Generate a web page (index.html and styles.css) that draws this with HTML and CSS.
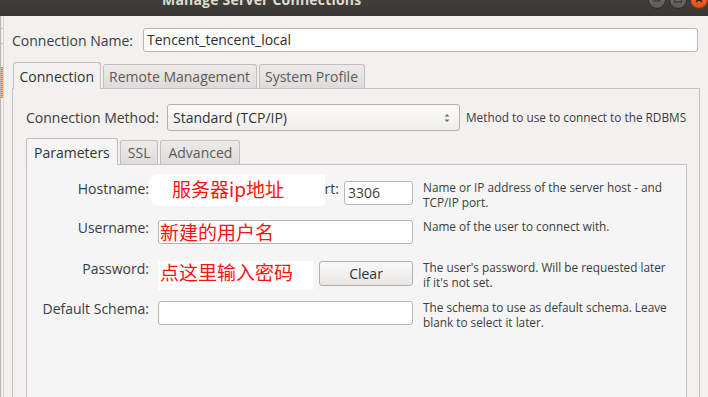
FILE: index.html
```html
<!DOCTYPE html>
<html>
<head>
<meta charset="utf-8">
<title>Manage Server Connections</title>
<link rel="stylesheet" href="styles.css">
</head>
<body>
<div class="titlebar">
  <div class="title">Manage Server Connections</div>
  <div class="wbtns">
    <span class="wbtn"><svg viewBox="0 0 18 18" width="18" height="18"><path d="M5.5 10h7" stroke="#3a3935" stroke-width="1.4"/></svg></span>
    <span class="wbtn"><svg viewBox="0 0 18 18" width="18" height="18"><rect x="5.5" y="4.5" width="7" height="6.5" fill="none" stroke="#3a3935" stroke-width="1.2"/></svg></span>
    <span class="wbtn close"><svg viewBox="0 0 18 18" width="18" height="18"><path d="M6 5l6 6M12 5l-6 6" stroke="#3b1a0c" stroke-width="1.5"/></svg></span>
  </div>
</div>
<div class="window">
  <div class="edge"><span class="edge-box"></span><span class="edge-mark"></span></div>
  <div class="content">
    <div class="name-row">
      <span class="label">Connection Name:</span>
      <div class="entry name-entry">Tencent_tencent_local</div>
    </div>
    <div class="notebook outer">
      <div class="tabs">
        <div class="tab active">Connection</div>
        <div class="tab">Remote Management</div>
        <div class="tab">System Profile</div>
      </div>
      <div class="page outer-page">
        <div class="method-row">
          <span class="label">Connection Method:</span>
          <div class="combo">
            <span>Standard (TCP/IP)</span>
            <svg class="updown" viewBox="0 0 8 14" width="8" height="14"><path d="M1.5 5.5L4 3l2.5 2.5z M1.5 8.5L4 11l2.5-2.5z" fill="#6a6a6a"/></svg>
          </div>
          <span class="help">Method to use to connect to the RDBMS</span>
        </div>
        <div class="notebook inner">
          <div class="tabs">
            <div class="tab active">Parameters</div>
            <div class="tab">SSL</div>
            <div class="tab">Advanced</div>
          </div>
          <div class="page inner-page">
            <div class="params">
              <span class="plabel">Hostname:</span>
              <div class="cell host-cell">
                <div class="entry host-entry"></div>
                <span class="port-label">Port:</span>
                <div class="entry port-entry">3306</div>
                <div class="paint host-paint">服务器ip地址</div>
              </div>
              <span class="help">Name or IP address of the server host - and TCP/IP port.</span>

              <span class="plabel">Username:</span>
              <div class="cell">
                <div class="entry user-entry red">新建的用户名</div>
              </div>
              <span class="help">Name of the user to connect with.</span>

              <span class="plabel">Password:</span>
              <div class="cell pass-cell">
                <div class="paint pass-paint red">点这里输入密码</div>
                <div class="button">Clear</div>
              </div>
              <span class="help">The user's password. Will be requested later if it's not set.</span>

              <span class="plabel">Default Schema:</span>
              <div class="cell">
                <div class="entry schema-entry"></div>
              </div>
              <span class="help">The schema to use as default schema. Leave blank to select it later.</span>
            </div>
          </div>
        </div>
      </div>
    </div>
  </div>
</div>
</body>
</html>
```

FILE: styles.css
```css
* { box-sizing: border-box; }

html, body {
  margin: 0;
  padding: 0;
}

body {
  width: 708px;
  height: 397px;
  overflow: hidden;
  background: #f2f1f0;
  font-family: "Open Sans", "Noto Sans", sans-serif;
  font-size: 14px;
  color: #3c3c3c;
}

/* ---------- title bar ---------- */
.titlebar {
  height: 16px;
  background: linear-gradient(#403f3b, #383733);
  display: flex;
  align-items: flex-start;
  overflow: hidden;
}

.title {
  margin-left: 162px;
  margin-top: -8px;
  font-weight: bold;
  font-size: 14px;
  line-height: 16px;
  color: #dfdbd2;
  letter-spacing: 0.2px;
}

.wbtns {
  margin-left: auto;
  margin-right: 0;
  display: flex;
  gap: 3px;
  margin-top: -9px;
}

.wbtn {
  width: 18px;
  height: 18px;
  border-radius: 50%;
  background: linear-gradient(#77766f, #5c5b56);
  border: 1px solid #2e2d2a;
  display: flex;
}

.wbtn svg { margin: -1px; }

.wbtn.close {
  background: linear-gradient(#f27844, #e04c17);
  border-color: #8c2e0c;
}

/* ---------- window body ---------- */
.window {
  display: flex;
  height: 400px;
}

.edge {
  width: 4px;
  flex: none;
  border-left: 1px solid #b9b6b1;
  border-right: 1px solid #d6d4d0;
  display: flex;
  flex-direction: column;
}

.edge-box {
  display: block;
  height: 16px;
  margin-top: 12px;
  border-top: 1px solid #c9c6c2;
  border-bottom: 1px solid #c9c6c2;
}

.edge-mark {
  display: block;
  width: 2px;
  height: 31px;
  margin-top: 23px;
  background: repeating-linear-gradient(#f07a45 0 1px, #f6b28f 1px 2px);
}

.content {
  flex: 1;
  padding: 12px 8px 0 8px;
  display: flex;
  flex-direction: column;
}

.name-row {
  display: grid;
  grid-template-columns: 131px 1fr;
  align-items: center;
  height: 24px;
}

.label { white-space: nowrap; }

.entry {
  height: 24px;
  background: #fff;
  border: 1px solid #b9b6b2;
  border-radius: 3px;
  padding: 0 3px;
  line-height: 22px;
  white-space: nowrap;
  overflow: hidden;
}

.name-entry {
  margin-right: 2px;
  color: #2d2d2d;
}

/* ---------- notebooks ---------- */
.notebook {
  display: flex;
  flex-direction: column;
}

.outer { margin-top: 10px; flex: 1; }

.tabs {
  display: flex;
  align-items: flex-end;
  gap: 2px;
  padding-left: 1px;
  position: relative;
  z-index: 1;
}

.tab {
  height: 24px;
  padding: 0 5.5px;
  border: 1px solid #c2bfba;
  border-bottom: none;
  border-radius: 3px 3px 0 0;
  background: linear-gradient(#ecebea, #dedcda);
  color: #5a5a5a;
  line-height: 23px;
  white-space: nowrap;
}

.tab.active {
  height: 27px;
  background: #f2f1f0;
  color: #333;
  margin-bottom: -1px;
  line-height: 28px;
}

.inner .tabs { padding-left: 0; }

.inner .tab { padding: 0 7px; }

.page {
  border: 1px solid #c4c1bc;
  flex: 1;
}

.outer-page {
  background: #f2f1f0;
  padding: 15px 0 0 13px;
  display: flex;
  flex-direction: column;
}

.method-row {
  display: flex;
  align-items: center;
  height: 27px;
}

.method-row .label { width: 141px; flex: none; }

.combo {
  width: 293px;
  height: 27px;
  flex: none;
  border: 1px solid #b4b1ac;
  border-radius: 3px;
  background: linear-gradient(#fbfbfa, #efeeed);
  display: flex;
  align-items: center;
  padding: 0 8px 0 5px;
  color: #333;
}

.combo span { flex: 1; }

.updown { display: block; }

.help {
  font-size: 11.8px;
  line-height: 15px;
  color: #3c3c3c;
}

.method-row .help { margin-left: 6px; white-space: nowrap; }

.inner {
  margin-top: 7px;
  margin-right: 12px;
  flex: 1;
}

.inner .tab.active { background: #f5f5f5; }

.inner-page {
  background: #f5f5f5;
  padding-top: 16px;
}

/* ---------- parameters grid ---------- */
.params {
  display: grid;
  grid-template-columns: 122px 255px 1fr;
  grid-template-rows: 39px 41px 40px 40px;
  column-gap: 9px;
  align-items: start;
}

.plabel {
  text-align: right;
  line-height: 16px;
  white-space: nowrap;
  color: #3c3c3c;
}

.params .help {
  margin-left: 1px;
  margin-top: -1px;
  padding-right: 14px;
}

.cell {
  display: flex;
  align-items: flex-start;
  position: relative;
}

.host-entry { width: 140px; }

.port-label { margin-left: auto; margin-right: 5px; line-height: 16px; }

.port-entry { width: 69px; }

.user-entry {
  width: 255px;
  padding-left: 1px;
  overflow: visible;
}

.schema-entry { width: 255px; }

.red {
  font-family: "Noto Sans CJK SC", sans-serif;
  font-size: 19px;
  color: #ff1010;
}

.user-entry.red { line-height: 21px; }

.paint {
  background: #fff;
  white-space: nowrap;
}

.host-paint {
  position: absolute;
  left: -9px;
  top: -7px;
  width: 176px;
  height: 32px;
  padding-left: 23px;
  border-radius: 10px 4px 2px 12px;
  font-family: "Noto Sans CJK SC", sans-serif;
  font-size: 19px;
  line-height: 30px;
  color: #ff1010;
}

.pass-paint {
  width: 155px;
  height: 29px;
  padding-left: 2px;
  line-height: 22px;
}

.button {
  margin-left: 6px;
  width: 94px;
  height: 25px;
  border: 1px solid #b3b0ab;
  border-radius: 3px;
  background: linear-gradient(#f9f9f8, #e8e7e5);
  text-align: center;
  line-height: 23px;
  color: #333;
}
```
